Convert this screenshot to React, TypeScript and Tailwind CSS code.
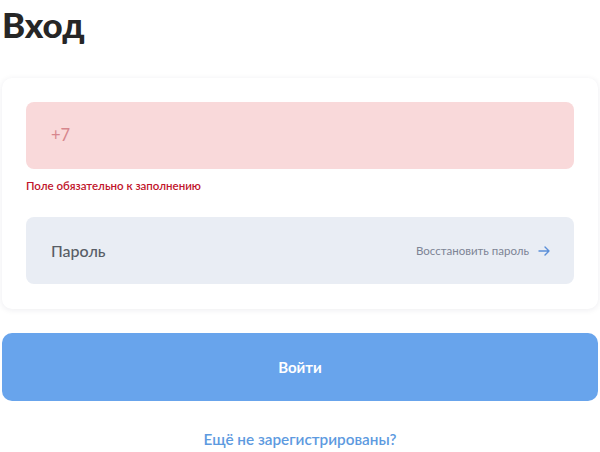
export default function App() {
  return (
    <div
      className="min-h-[452px] bg-white px-[2px] text-[#2b2b2b]"
      style={{ fontFamily: "Lato, 'Noto Sans', sans-serif" }}
    >
      <h1 className="pt-[2px] text-[35px] font-black leading-[44px] text-[#262626]">
        Вход
      </h1>

      <div className="mt-[32px] rounded-[10px] bg-white px-6 pb-[25px] pt-6 shadow-[0_1px_6px_rgba(20,30,60,0.08)]">
        <div className="flex h-[67px] items-center rounded-[8px] bg-[#f9d9da] px-[25px] text-[16.5px] text-[#d7868d]">
          +7
        </div>
        <p className="mt-[10px] text-[11.5px] font-semibold leading-[14px] text-[#c1152c]">
          Поле обязательно к заполнению
        </p>

        <div className="mt-[24px] flex h-[67px] items-center justify-between rounded-[8px] bg-[#e9edf4] pl-[25px] pr-[24px]">
          <span className="text-[16px] font-medium text-[#585d66]">Пароль</span>
          <span className="flex items-center gap-[9px] text-[11.5px] text-[#7d8494]">
            Восстановить пароль
            <svg
              width="12"
              height="10"
              viewBox="0 0 12 10"
              fill="none"
              stroke="#5b8fd8"
              strokeWidth="1.4"
              strokeLinecap="round"
              strokeLinejoin="round"
            >
              <path d="M1 5h10M7 1l4 4-4 4" />
            </svg>
          </span>
        </div>
      </div>

      <button className="mt-6 flex h-[68px] w-full items-center justify-center rounded-[10px] bg-[#68a4ec] text-[15px] font-bold text-white">
        Войти
      </button>

      <div className="mt-[26px] text-center">
        <a className="text-[15.3px] font-semibold text-[#5d9ae0]" href="#">
          Ещё не зарегистрированы?
        </a>
      </div>
    </div>
  );
}
